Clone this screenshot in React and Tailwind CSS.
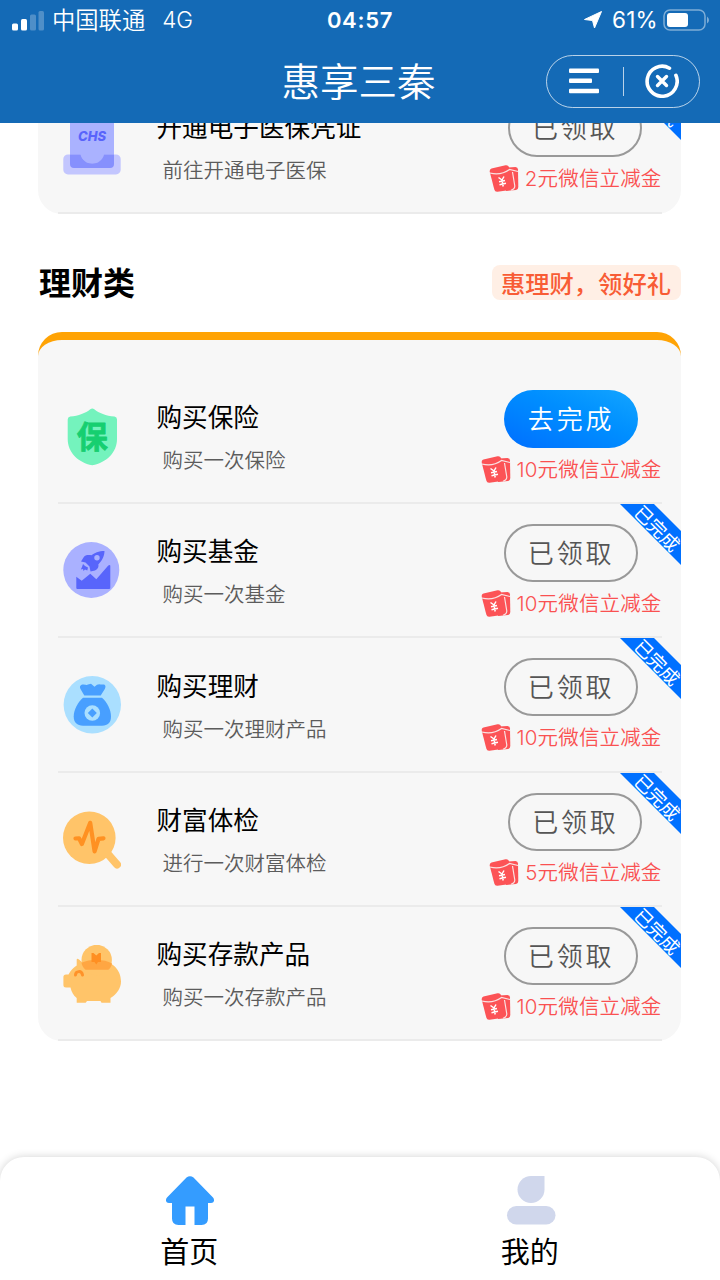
import clsx from 'clsx'

function CardIcon() {
  return (
    <svg viewBox="0 0 58 58" className="h-[58px] w-[58px]">
      <path d="M7 0H51V47a4 4 0 0 1-4 4H11a4 4 0 0 1-4-4Z" fill="#aab2ff" />
      <path d="M5 37.4H17.5C19 43 23.500 46.400 29.300 46.400S39.500 43 41 37.400H53a4.700 4.700 0 0 1 4.700 4.700V52.700a4.700 4.700 0 0 1-4.700 4.700H5A4.700 4.700 0 0 1 .3 52.700V42.100A4.700 4.700 0 0 1 5 37.400Z" fill="#c3c6fe" />
      <path d="M7 37.400H17.500C19 43 23.500 46.400 29.300 46.400S39.500 43 41 37.400H51V47a4 4 0 0 1-4 4H11a4 4 0 0 1-4-4Z" fill="#8690fd" />
      <text x="29" y="24" textAnchor="middle" textLength="28" lengthAdjust="spacingAndGlyphs" fontSize="13.500" fontWeight="800" fontStyle="italic" fontFamily="Inter, sans-serif" fill="#5964fb">CHS</text>
    </svg>
  )
}

function ShieldIcon() {
  return (
    <svg viewBox="0 0 58 58" className="h-[58px] w-[58px]">
      <path d="M27.300 1.200Q29.300-.3 31.300 1.200C36 5 43 7.800 51.500 8.500Q54 8.800 54 11.500V31C54 44 44 54.500 29.300 57.300 14.700 54.500 4.700 44 4.700 31V11.500Q4.700 8.800 7.200 8.500C15.600 7.800 22.600 5 27.300 1.200Z" fill="#74f3bd" />
      <text x="29.300" y="40" textAnchor="middle" fontSize="31" fontWeight="700" fontFamily="'Noto Sans CJK SC', sans-serif" fill="#16cf70" stroke="#16cf70" strokeWidth=".8" strokeLinejoin="round">保</text>
    </svg>
  )
}

function FundIcon() {
  return (
    <svg viewBox="0 0 58 58" className="h-[58px] w-[58px]">
      <circle cx="28.300" cy="28" r="28" fill="#aab1ff" />
      <path d="M13.300 34.700 18.700 38.700 27.300 31.700 33.300 37.300 45.300 23.600Q47.300 22 47.300 24V46Q47.300 47 46 47H14.500Q13.300 47 13.300 46Z" fill="#5865fb" />
      <path d="M41.500 9C36 9 31 11 28.500 13.300 25 12.800 22 13 20.500 15.500L18 19.500 22.500 20.500 26.500 24.500 27.500 29.500 32 28.500C35 27 36 24.500 35.300 22.500 39 19 41.500 14 41.500 9Z" fill="#5865fb" />
      <path d="M20 22 22 24 25 25.500 24.300 28.500 22 27.500 20.500 29 20 27 17.800 27.500 19 25Z" fill="#5865fb" />
      <circle cx="34" cy="15.700" r="2.700" fill="#aab1ff" />
    </svg>
  )
}

function MoneyBagIcon() {
  return (
    <svg viewBox="0 0 58 58" className="h-[58px] w-[58px]">
      <circle cx="29.300" cy="28.700" r="28.700" fill="#aadfff" />
      <path d="M21.300 19.400 17.500 13C16 10 18 8.300 21 8.600 23.500 9 24 9.300 25 8.600L28 7.800 31.500 10.800 34 8.800C36 7.500 38 8.800 40 8.400 43 8.300 43 11 41.500 13.500L37.700 19.400Z" fill="#489fff" />
      <path d="M20 21.700H39C44 26 48 33.500 48 40.500 48 46.500 45 49.700 39 49.700H20C14 49.700 10.700 46.500 10.700 40.500 10.700 33.500 15 26 20 21.700Z" fill="#489fff" />
      <circle cx="29.300" cy="37" r="7.800" fill="#aadfff" />
      <path d="M29.300 32.500 33.800 37 29.300 41.500 24.800 37Z" fill="#489fff" />
    </svg>
  )
}

function HealthIcon() {
  return (
    <svg viewBox="0 0 58 58" className="h-[58px] w-[58px]">
      <path d="M44 42 54 53.500" stroke="#ffc469" strokeWidth="8" strokeLinecap="round" />
      <circle cx="26.300" cy="26.700" r="26.300" fill="#ffc469" />
      <path d="M12.500 27.500 16 27.300 18.900 33 27.200 11.800 31.600 40.500 35.500 27.800 40.500 27.300" fill="none" stroke="#ff9122" strokeWidth="4.200" strokeLinecap="round" strokeLinejoin="round" />
    </svg>
  )
}

function PiggyIcon() {
  return (
    <svg viewBox="0 0 58 58" className="h-[58px] w-[58px]">
      <path d="M13.700 14.500Q14 13 16 14.500L19.500 17.500C24 15.500 28 15 34 15 48 15 58 24 58 36.500 58 43 54 49 47.500 53V57.800H38.500L37.500 56H24L22.700 57.800H13.700V53C10.500 50.500 8.500 47 7.500 42.500H3Q.4 42.500 .4 40V32Q.4 29.500 3 29.500H5.500C7.500 25.500 10.500 22.500 13.700 20.500Z" fill="#ffc469" />
      <circle cx="33.700" cy="15" r="15.200" fill="#ffc469" />
      <path d="M18.500 17.800C23 15.500 28 15 34 15 39.500 15 45 16.200 49 18.400 48.500 21 47 23.500 45.300 24.800H22.500C20.200 23 19 20.500 18.500 17.800Z" fill="#ffa642" />
      <path d="M28.500 8H30.500L33.300 10.500 36 8H38V17H35L33.300 19.500 31.500 17H28.500Z" fill="#ff8f22" />
      <path d="M12.500 30C12.700 26 18.500 25 19.500 30" fill="none" stroke="#ff9229" strokeWidth="3" strokeLinecap="round" />
    </svg>
  )
}

function RedPacketIcon() {
  return (
    <svg viewBox="0 0 30 28" className="h-[28px] w-[30px]">
      <path d="M18 3.500 26.500 3Q28.800 3 29 5.500L29.300 23Q29.300 25.500 27 26L17 27Z" fill="#fc5356" />
      <path d="M2.500 4.500 16.500 1.300Q19 .8 20 3L24.500 21.500Q25 25 22.500 25.700L8.500 27.700Q6 28 5.300 25.500L.8 8Q.2 5.300 2.500 4.500Z" fill="#fc5356" />
      <path d="M.8 9C7 10.500 15 9.500 20.500 5.500L29 7.500M23.500 8 25.800 22Q25.800 25 22 26.300" fill="none" stroke="#f9e3e3" strokeWidth="1.200" />
      <path d="M9.500 13.500 13 16 15 12.500M13 16 14.200 22.500M10 17.800 16 16.500M10.500 20.700 17 19.300" fill="none" stroke="#fff" strokeWidth="1.500" />
    </svg>
  )
}

const TASKS = [
  { title: '购买保险', desc: '购买一次保险', reward: '10元微信立减金', done: false, Icon: ShieldIcon },
  { title: '购买基金', desc: '购买一次基金', reward: '10元微信立减金', done: true, Icon: FundIcon },
  { title: '购买理财', desc: '购买一次理财产品', reward: '10元微信立减金', done: true, Icon: MoneyBagIcon },
  { title: '财富体检', desc: '进行一次财富体检', reward: '5元微信立减金', done: true, Icon: HealthIcon },
  { title: '购买存款产品', desc: '购买一次存款产品', reward: '10元微信立减金', done: true, Icon: PiggyIcon },
]

const MEDICAL_TASK = { title: '开通电子医保凭证', desc: '前往开通电子医保', reward: '2元微信立减金', done: true, Icon: CardIcon }

function TaskRow({ task }) {
  const { title, desc, reward, done, Icon } = task
  return (
    <div className="relative mx-[19.500px] flex h-[134.300px] border-b-2 border-[#ebebeb]">
      <div className="ml-[5px] pt-[38px]">
        <Icon />
      </div>
      <div className="ml-9 flex-1 pt-[28.300px]">
        <div className="h-9 text-[25.600px] leading-9 text-black">{title}</div>
        <div className="mt-2.5 ml-[6px] h-[30px] text-[20.500px] leading-[30px] font-[350] text-[#5c5c5c]">{desc}</div>
      </div>
      <div className="flex flex-col items-center pt-5">
        <button
          className={clsx(
            'h-[58px] w-[134px] rounded-full pb-[3px] text-[26px] font-[350] tracking-[2.800px]',
            done ? 'border-2 border-[#999] text-[#555]' : 'bg-linear-to-tr from-[#006eff] to-[#14a5ff] text-white'
          )}
        >
          {done ? '已领取' : '去完成'}
        </button>
        <div className="mt-1.5 flex h-[30px] items-center gap-1.5 font-[Inter,'Noto_Sans_CJK_SC',sans-serif] text-[20.500px] leading-[28px] font-[350] text-[#fa5151]">
          <RedPacketIcon />
          <span className="pt-0.5 tracking-[0.150px]">{reward}</span>
        </div>
      </div>
      {done && (
        <div className="absolute top-0 -right-[19.500px] h-[61px] w-[61px] overflow-hidden">
          <div className="absolute top-[10px] -left-[11px] h-6 w-[100px] rotate-45 bg-[#0070ff] pt-px pl-px text-center text-[18.500px] leading-[26px] text-white">已完成</div>
        </div>
      )}
    </div>
  )
}

function StatusBar() {
  return (
    <div className="grid h-10 grid-cols-3 items-center px-3 text-white">
      <div className="flex items-center">
        <svg viewBox="0 0 32 20" className="mt-px h-5 w-8" fill="#fff">
          <rect x="0" y="12.500" width="6" height="7" rx="1.500" />
          <rect x="9" y="8" width="6" height="11.500" rx="1.500" />
          <rect x="18" y="3.500" width="6" height="16" rx="1.500" opacity=".25" />
          <rect x="26.500" y="0" width="5.500" height="19.500" rx="1.500" opacity=".25" />
        </svg>
        <span className="ml-2 pb-px text-[23.300px] font-[350] whitespace-nowrap">中国联通</span>
        <span className="ml-[17px] font-[Inter,sans-serif] text-[22.500px] font-[350]">4G</span>
      </div>
      <div className="text-center font-[Inter,sans-serif] text-[22px] font-semibold tracking-[0.700px]">04:57</div>
      <div className="flex items-center justify-end">
        <svg viewBox="0 0 18 18" className="h-[18px] w-[18px]">
          <path d="M17.500 .5 10.500 17 8.500 9.500 .5 8.500Z" fill="#fff" stroke="#fff" strokeLinejoin="round" />
        </svg>
        <span className="ml-[10px] font-[Inter,sans-serif] text-[22.500px] font-normal tracking-[0.300px]">61%</span>
        <svg viewBox="0 0 46 22" className="-mr-px ml-[5px] h-[22px] w-[46px]">
          <rect x="1" y="1" width="41" height="20" rx="6" fill="none" stroke="#fff" strokeOpacity=".45" strokeWidth="1.500" />
          <rect x="4" y="4" width="21" height="14" rx="3" fill="#fff" />
          <path d="M44 7.500Q46 9 46 11T44 14.500Z" fill="#fff" opacity=".45" />
        </svg>
      </div>
    </div>
  )
}

function NavBar() {
  return (
    <div className="grid h-[82px] grid-cols-[1fr_auto_1fr] items-center">
      <h1 className="col-start-2 pr-[3px] pb-[5px] text-[38.500px] leading-[76px] font-[350] text-white">惠享三秦</h1>
      <div className="mr-[20px] flex h-[53px] w-[154px] items-center justify-self-end rounded-full border border-white/70">
        <svg viewBox="0 0 30 26" className="ml-[22px] h-[26px] w-[30px]" fill="#fff">
          <rect width="30" height="4.400" rx="1" y=".5" />
          <rect width="23" height="4.400" rx="1" y="10.500" />
          <rect width="30" height="4.400" rx="1" y="20.800" />
        </svg>
        <div className="ml-6 h-[29px] w-px bg-white/70" />
        <svg viewBox="0 0 34 34" className="ml-[21px] h-[34px] w-[34px]" fill="none" stroke="#fff" strokeWidth="3.600" strokeLinecap="round">
          <path d="M24.500 4.200A15 15 0 1 0 30.900 11.300" />
          <path d="M12.500 12.500 21.500 21.500M21.500 12.500 12.500 21.500" strokeWidth="3.400" />
        </svg>
      </div>
    </div>
  )
}

function TabBar() {
  return (
    <nav className="grid h-[123px] grid-cols-2 rounded-t-3xl bg-white pt-[19px] pr-5 pl-[19px] text-[29px] shadow-[0_0_8px_rgba(0,0,0,0.18)]">
      <div className="flex flex-col items-center">
        <svg viewBox="0 0 50 50" className="ml-0.5 h-[50px] w-[50px]">
          <path d="M21.500 1.500Q25-1.200 28.500 1.500L48 21.500C50 24 49 27 46 27H43V42.500Q43 49 36.500 49H29.500V30.500H20.500V49H13.500Q7 49 7 42.500V27H4C1 27 0 24 2 21.500Z" fill="#349cff" />
        </svg>
        <span className="mt-1 leading-10">首页</span>
      </div>
      <div className="flex flex-col items-center">
        <svg viewBox="0 0 50 50" className="ml-0.5 h-[50px] w-[50px]" fill="#d0d7ec">
          <path d="M25 0H38.500V13.500A13.500 13.500 0 1 1 25 0Z" />
          <rect x="1" y="30" width="48.500" height="18.500" rx="9.250" />
        </svg>
        <span className="mt-1 leading-10">我的</span>
      </div>
    </nav>
  )
}

export default function App() {
  return (
    <div className="flex h-[1280px] w-[720px] flex-col overflow-hidden bg-white font-['Noto_Sans_CJK_SC',sans-serif] text-black">
      <header className="h-[123px] shrink-0 bg-[#146ab6]">
        <StatusBar />
        <NavBar />
      </header>

      <main className="min-h-0 flex-1 overflow-hidden pr-[39px] pl-[38px]">
        <section className="-mt-[43.700px] rounded-3xl bg-[#f7f7f7]">
          <TaskRow task={MEDICAL_TASK} />
        </section>

        <div className="mt-[50.400px] flex h-9 items-center justify-between">
          <h2 className="pb-[3px] pl-px text-[32px] leading-9 font-bold">理财类</h2>
          <span className="rounded-lg bg-[#ffefe5] pr-[10px] pl-[9px] text-[24.300px] leading-[35px] font-medium text-[#f85c35]">惠理财，领好礼</span>
        </div>

        <section className="mt-8 rounded-3xl border-t-8 border-[#ffa304] bg-[#f7f7f7] pt-[29.800px]">
          {TASKS.map((task) => (
            <TaskRow key={task.title} task={task} />
          ))}
        </section>
      </main>

      <TabBar />
    </div>
  )
}
